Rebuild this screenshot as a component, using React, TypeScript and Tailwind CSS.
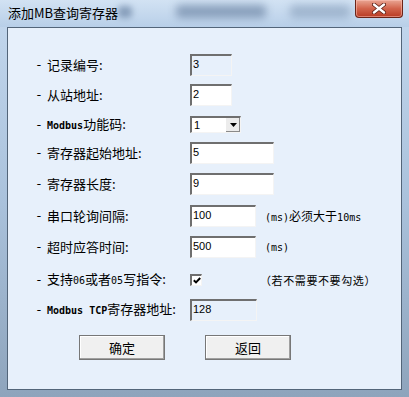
import React from "react";

const cjk = { fontFamily: '"Noto Sans CJK SC", "Noto Sans", sans-serif' };
const mono = { fontFamily: '"DejaVu Sans Mono", "Liberation Mono", monospace' };
const sans = { fontFamily: '"Liberation Sans", Arial, sans-serif' };

function Field({ w, value, ro }: { w: number; value: string; ro?: boolean }) {
  return (
    <div
      className={`h-[22px] border-t-2 border-l-2 border-t-[#6f6f6f] border-l-[#6f6f6f] border-b border-r border-b-[#f4f4f4] border-r-[#f4f4f4] pl-[1px] pt-[2px] text-[11px] leading-[13px] text-black ${ro ? "bg-[#e7f0fb]" : "bg-white"}`}
      style={{ ...sans, width: w }}
    >
      {value}
    </div>
  );
}

function Label({ children }: { children: React.ReactNode }) {
  return (
    <div className="w-[155px] shrink-0 flex items-center text-[13px] leading-[16px] text-black" style={cjk}>
      <span className="w-[12px] shrink-0" style={mono}>-</span>
      <span className="flex items-baseline">{children}</span>
    </div>
  );
}

function Btn({ children }: { children: React.ReactNode }) {
  return (
    <div
      className="w-[86px] h-[25px] bg-[#f0f0f0] border border-[#777] shadow-[inset_-1px_-1px_0_#a0a0a0,inset_1px_1px_0_#ffffff] flex items-center justify-center text-[13px] text-black"
      style={cjk}
    >
      {children}
    </div>
  );
}

export default function App() {
  return (
    <div className="w-[409px] h-[397px] flex flex-col bg-gradient-to-b from-[#c4d8ee] via-[#aac2dc] to-[#8ea4bc] overflow-hidden">
      {/* title bar */}
      <div className="relative h-[27px] shrink-0 flex items-center pl-[8px] bg-gradient-to-b from-[#d2e2f3] to-[#b8cfe8]">
        <div className="absolute left-[118px] top-[6px] w-[14px] h-[12px] rounded bg-[#6d86a6] blur-[3px] opacity-70" />
        <div className="absolute left-[176px] top-[5px] w-[90px] h-[13px] rounded bg-[#5f7899] blur-[4px] opacity-60" />
        <div className="absolute left-[290px] top-[5px] w-[60px] h-[13px] rounded bg-[#7790ae] blur-[4px] opacity-50" />
        <span className="relative text-[13px] leading-[16px] text-black -mt-[2px]" style={cjk}>
          添加MB查询寄存器
        </span>
        <div className="absolute left-[355px] top-0 w-[48px] h-[18px] rounded-b-[4px] border border-t-0 border-[#6b2418] bg-gradient-to-b from-[#e9a593] via-[#d2644c] to-[#b83a22] shadow-[inset_0_0_0_1px_rgba(255,200,190,0.5)] flex items-center justify-center">
          <svg width="14" height="11" viewBox="0 0 14 11">
            <path d="M2 1.5 L12 9.5 M12 1.5 L2 9.5" stroke="#5a1c12" strokeWidth="4" strokeLinecap="round" />
            <path d="M2 1.5 L12 9.5 M12 1.5 L2 9.5" stroke="#ffffff" strokeWidth="2.4" strokeLinecap="round" />
          </svg>
        </div>
      </div>

      {/* client */}
      <div className="flex-1 ml-[7px] mr-[7px] mb-[7px] border border-[#536579] bg-[#e7f0fb] flex flex-col pl-[27px]">
        <div className="mt-[26px] flex items-center h-[22px]">
          <Label>记录编号:</Label>
          <Field w={42} value="3" ro />
        </div>
        <div className="mt-[8px] flex items-center h-[22px]">
          <Label>从站地址:</Label>
          <Field w={42} value="2" />
        </div>
        <div className="mt-[10px] flex items-center h-[17px]">
          <Label>
            <span className="text-[10px] font-bold" style={mono}>Modbus</span>功能码:
          </Label>
          <div className="w-[51px] h-[17px] bg-white border-t-2 border-l-2 border-t-[#6f6f6f] border-l-[#6f6f6f] border-b border-r border-b-[#f4f4f4] border-r-[#f4f4f4] flex">
            <div className="flex-1 pl-[2px] text-[11px] leading-[14px] text-black" style={sans}>1</div>
            <div className="w-[15px] h-full bg-[#ececec] border-l border-[#ffffff] shadow-[inset_-1px_-1px_0_#8a8a8a] flex items-center justify-center">
              <svg width="7" height="4" viewBox="0 0 7 4">
                <path d="M0 0 H7 L3.5 4 Z" fill="#000" />
              </svg>
            </div>
          </div>
        </div>
        <div className="mt-[9px] flex items-center h-[22px]">
          <Label>寄存器起始地址:</Label>
          <Field w={84} value="5" />
        </div>
        <div className="mt-[9px] flex items-center h-[22px]">
          <Label>寄存器长度:</Label>
          <Field w={84} value="9" />
        </div>
        <div className="mt-[10px] flex items-center h-[22px]">
          <Label>串口轮询间隔:</Label>
          <Field w={66} value="100" />
          <span className="ml-[9px] flex items-baseline text-[12px] text-black" style={cjk}>
            <span className="text-[10px]" style={mono}>(ms)</span>必须大于<span className="text-[10px]" style={mono}>10ms</span>
          </span>
        </div>
        <div className="mt-[9px] flex items-center h-[22px]">
          <Label>超时应答时间:</Label>
          <Field w={66} value="500" />
          <span className="ml-[9px] text-[10px] text-black" style={mono}>(ms)</span>
        </div>
        <div className="mt-[16px] flex items-center h-[12px]">
          <Label>
            支持<span className="text-[10px]" style={mono}>06</span>或者<span className="text-[10px]" style={mono}>05</span>写指令:
          </Label>
          <div className="w-[12px] h-[12px] bg-white border-t-2 border-l-2 border-t-[#6f6f6f] border-l-[#6f6f6f] border-b border-r border-b-[#f4f4f4] border-r-[#f4f4f4] flex items-center justify-center">
            <svg width="8" height="7" viewBox="0 0 8 7">
              <path d="M0.8 3.2 L3 5.4 L7.2 1" stroke="#000" strokeWidth="2" fill="none" />
            </svg>
          </div>
          <span className="ml-[58px] text-[11px] tracking-[0.6px] text-black" style={cjk}>（若不需要不要勾选）</span>
        </div>
        <div className="mt-[13px] flex items-center h-[22px]">
          <Label>
            <span className="text-[10px] font-bold" style={mono}>Modbus TCP</span>寄存器地址:
          </Label>
          <Field w={67} value="128" ro />
        </div>
        <div className="mt-[14px] flex pl-[44px] gap-[40px]">
          <Btn>确定</Btn>
          <Btn>返回</Btn>
        </div>
      </div>
    </div>
  );
}
